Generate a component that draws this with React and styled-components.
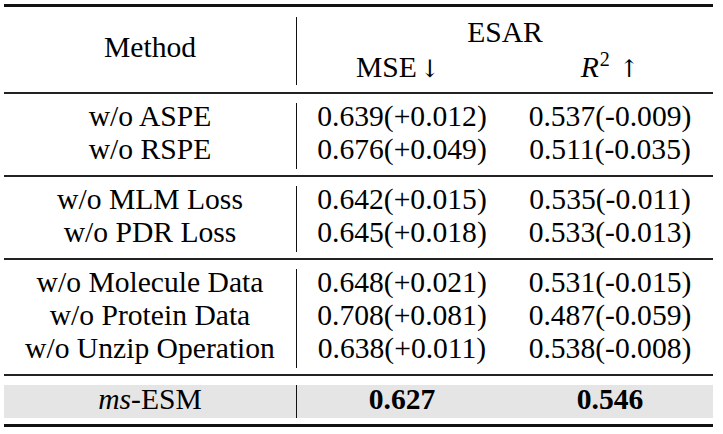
import React from "react";
import styled, { createGlobalStyle } from "styled-components";

const GlobalStyle = createGlobalStyle`
  body {
    margin: 0;
    background: #ffffff;
    font-family: "Liberation Serif", "Times New Roman", serif;
    color: #000;
  }
`;

const Table = styled.div`
  width: 709px;
  margin: 4px 0 0 4px;
  font-size: 29.6px;
  border-top: 3px solid #111;
`;

const Section = styled.div`
  padding: ${(p) => p.$pad || "8.5px 0 6.5px"};
  border-bottom: ${(p) => (p.$thick ? "3px solid #111" : "2px solid #222")};
`;

const HeadGrid = styled.div`
  display: grid;
  grid-template-columns: 293px 1fr;
`;

const MethodHead = styled.div`
  display: flex;
  align-items: center;
  justify-content: center;
  border-right: 1px solid #111;
  padding-bottom: 8px;
`;

const HeadRight = styled.div`
  display: flex;
  flex-direction: column;
`;

const HeadLine = styled.div`
  height: 34px;
  line-height: 30px;
  text-align: center;
`;

const SubHead = styled.div`
  display: grid;
  grid-template-columns: 210px 1fr;
  height: 34px;
  line-height: 32px;
  text-align: center;
`;

const SubCell = styled.div`
  padding-right: ${(p) => p.$shift || "0"};
`;

const Group = styled.div`
  display: grid;
  grid-template-columns: 293px 210px 1fr;
  background: ${(p) => (p.$shade ? "#e5e5e5" : "transparent")};
`;

const Column = styled.div`
  display: flex;
  flex-direction: column;
  align-items: center;
  border-right: ${(p) => (p.$divider ? "1px solid #111" : "none")};
`;

const Line = styled.div`
  height: 33px;
  line-height: ${(p) => p.$lh || "27px"};
  white-space: nowrap;
  font-weight: ${(p) => (p.$bold ? 700 : 400)};
`;

const Arrow = styled.span`
  font-family: "DejaVu Serif", serif;
  font-size: 0.82em;
  margin-left: ${(p) => p.$gap || "4px"};
`;

const Sup = styled.sup`
  font-size: 0.68em;
  font-style: normal;
  vertical-align: 0.55em;
  line-height: 0;
  margin-left: 1px;
`;

const groups = [
  [
    ["w/o ASPE", "0.639(+0.012)", "0.537(-0.009)"],
    ["w/o RSPE", "0.676(+0.049)", "0.511(-0.035)"],
  ],
  [
    ["w/o MLM Loss", "0.642(+0.015)", "0.535(-0.011)"],
    ["w/o PDR Loss", "0.645(+0.018)", "0.533(-0.013)"],
  ],
  [
    ["w/o Molecule Data", "0.648(+0.021)", "0.531(-0.015)"],
    ["w/o Protein Data", "0.708(+0.081)", "0.487(-0.059)"],
    ["w/o Unzip Operation", "0.638(+0.011)", "0.538(-0.008)"],
  ],
];

const App = () => {
  return (
    <>
      <GlobalStyle />
      <Table>
        <Section $pad="10px 0 7px">
          <HeadGrid>
            <MethodHead>Method</MethodHead>
            <HeadRight>
              <HeadLine>ESAR</HeadLine>
              <SubHead>
                <SubCell $shift="8px">
                  MSE<Arrow $gap="3px">↓</Arrow>
                </SubCell>
                <SubCell>
                  <i>R</i>
                  <Sup>2</Sup>
                  <Arrow $gap="9px">↑</Arrow>
                </SubCell>
              </SubHead>
            </HeadRight>
          </HeadGrid>
        </Section>

        {groups.map((rows, i) => (
          <Section key={i}>
            <Group>
              <Column $divider>
                {rows.map((r) => (
                  <Line key={r[0]}>{r[0]}</Line>
                ))}
              </Column>
              <Column>
                {rows.map((r) => (
                  <Line key={r[0]}>{r[1]}</Line>
                ))}
              </Column>
              <Column>
                {rows.map((r) => (
                  <Line key={r[0]}>{r[2]}</Line>
                ))}
              </Column>
            </Group>
          </Section>
        ))}

        <Section $thick $pad="9px 0 6px">
          <Group $shade>
            <Column $divider>
              <Line $lh="29px">
                <i>ms</i>-ESM
              </Line>
            </Column>
            <Column>
              <Line $lh="29px" $bold>0.627</Line>
            </Column>
            <Column>
              <Line $lh="29px" $bold>0.546</Line>
            </Column>
          </Group>
        </Section>
      </Table>
    </>
  );
};

export default App;
